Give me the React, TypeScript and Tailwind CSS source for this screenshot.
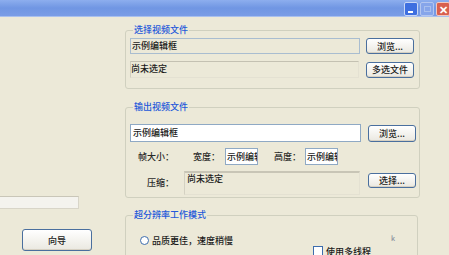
import React from 'react';

const font = { fontFamily: '"Noto Sans CJK SC", "Noto Sans", sans-serif' };

function XpButton({ label, className }: { label: string; className: string }) {
  return (
    <button
      className={`flex items-center justify-center rounded-[3px] border border-[#4A6F9E] bg-gradient-to-b from-[#FFFFFF] to-[#EAE8E0] text-[9px] font-medium leading-none text-[#1A1A1A] shadow-[inset_0_-1px_0_#D6D0C2] ${className}`}
    >
      {label}
    </button>
  );
}

function Legend({ children }: { children: React.ReactNode }) {
  return (
    <legend className="ml-[3px] px-[1px] text-[9px] font-medium leading-[12px] text-[#2458DA]">{children}</legend>
  );
}

export default function App() {
  return (
    <div className="w-[449px] h-[255px] overflow-hidden bg-[#ECE9D8] flex flex-col font-medium" style={font}>
      {/* title bar */}
      <div className="h-[17px] shrink-0 bg-gradient-to-b from-[#8DAEEE] via-[#7096E3] to-[#7A9DE6] border-b border-[#A9C0EE] flex items-start justify-end pt-[2px] gap-[2px]">
        <div className="w-[14px] h-[14px] rounded-[2px] bg-[#3E6FE0] border border-[#C9D7F5] flex items-end pl-[3px] pb-[2px]">
          <div className="w-[5px] h-[2px] bg-white" />
        </div>
        <div className="w-[14px] h-[14px] rounded-[2px] bg-[#86A5EA] border border-[#B3C6F0] flex items-center justify-center">
          <div className="w-[7px] h-[6px] border border-[#A8BFEE]" />
        </div>
        <div className="w-[14px] h-[14px] -mr-[1px] rounded-[2px] bg-[#D8604F] border border-[#F0C8C0] flex items-center justify-center text-white text-[11px] leading-none font-bold">
          ✕
        </div>
      </div>

      <div className="flex flex-1">
        {/* left side */}
        <div className="w-[125px] shrink-0 flex flex-col">
          <div className="mt-[179px] w-[79px] h-[13px] bg-[#F4F3EE] border border-[#D8D5C8] border-t-[#C9C6B8] border-l-0" />
          <XpButton label="向导" className="mt-[20px] ml-[22px] w-[70px] h-[22px]" />
        </div>

        {/* right side */}
        <div className="w-[295px] shrink-0 pt-[7px] flex flex-col">
          <fieldset className="border border-[#D0D0BF] rounded-[3px] pl-[4px] pr-[5px] pb-[10px]">
            <Legend>选择视频文件</Legend>
            <div className="mt-[2px] flex items-center">
              <div className="w-[230px] h-[16px] bg-[#ECE9D8] border border-[#A9BDD0] pl-[1px] text-[9px] leading-[14px] text-[#1A1A1A]">
                示例编辑框
              </div>
              <XpButton label="浏览..." className="ml-[6px] w-[48px] h-[16px]" />
            </div>
            <div className="mt-[7px] flex items-center">
              <div className="w-[229px] h-[17px] bg-[#ECE9D8] border border-[#E4E1D2] border-t-[#C4C1B2] border-l-[#D2CFC0] text-[9px] leading-[14px] text-[#1A1A1A]">
                尚未选定
              </div>
              <XpButton label="多选文件" className="ml-[7px] w-[48px] h-[16px]" />
            </div>
          </fieldset>

          <fieldset className="mt-[12px] border border-[#D0D0BF] rounded-[3px] pl-[4px] pr-[3px] pb-[2px]">
            <Legend>输出视频文件</Legend>
            <div className="mt-[11px] flex items-center">
              <div className="w-[231px] h-[18px] bg-white border border-[#8FA9C4] pl-[2px] text-[9px] leading-[16px] text-[#1A1A1A]">
                示例编辑框
              </div>
              <XpButton label="浏览..." className="ml-[7px] w-[48px] h-[17px]" />
            </div>
            <div className="mt-[6px] h-[17px] flex items-center text-[9px] leading-none text-[#2A2A2A] whitespace-nowrap">
              <span className="w-[44px] text-right">帧大小：</span>
              <span className="ml-[19px] w-[27px]">宽度：</span>
              <div className="ml-[5px] w-[33px] h-[17px] bg-white border border-[#8FA9C4] pl-[1px] leading-[15px] overflow-hidden text-[#1A1A1A]">
                示例编辑
              </div>
              <span className="ml-[16px] w-[27px]">高度：</span>
              <div className="ml-[4px] w-[33px] h-[17px] bg-white border border-[#8FA9C4] pl-[1px] leading-[15px] overflow-hidden text-[#1A1A1A]">
                示例编辑
              </div>
            </div>
            <div className="mt-[6px] flex items-start text-[9px] text-[#2A2A2A]">
              <span className="mt-[6px] w-[44px] text-right leading-[12px] whitespace-nowrap">压缩：</span>
              <div className="ml-[10px] w-[176px] h-[24px] bg-[#ECE9D8] border border-[#E4E1D2] border-t-2 border-t-[#C8C5B6] border-l-[#D4D1C2] pl-[2px] leading-[12px] text-[#1A1A1A]">
                尚未选定
              </div>
              <XpButton label="选择..." className="mt-[2px] ml-[8px] w-[48px] h-[15px]" />
            </div>
          </fieldset>

          <fieldset className="mt-[11px] w-[293px] border border-[#D0D0BF] rounded-[3px] pl-[4px] h-[60px]">
            <Legend>超分辨率工作模式</Legend>
            <div className="mt-[14px] ml-[10px] h-[10px] flex items-center">
              <div className="w-[9px] h-[9px] rounded-full border border-[#3D6DAD] bg-white" />
              <span className="ml-[3px] text-[9px] leading-none text-[#1A1A1A]">品质更佳，速度稍慢</span>
              <span className="ml-[158px] -mt-[4px] text-[7px] leading-none text-[#8A8F9C]">k</span>
            </div>
            <div className="mt-[1px] ml-[183px] flex items-center">
              <div className="w-[10px] h-[10px] border border-[#3D6DAD] bg-white" />
              <span className="ml-[3px] text-[9px] leading-none text-[#1A1A1A]">使用多线程</span>
            </div>
          </fieldset>
        </div>
      </div>
    </div>
  );
}
